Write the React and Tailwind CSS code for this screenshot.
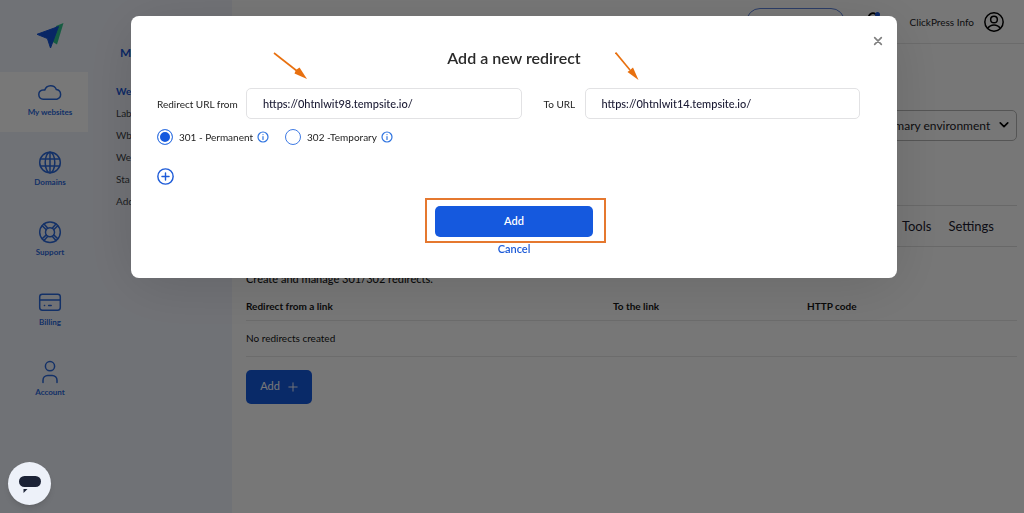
import { useState } from 'react';

const navItems = [
  { label: 'My websites', icon: CloudIcon, active: true },
  { label: 'Domains', icon: GlobeIcon },
  { label: 'Support', icon: SupportIcon },
  { label: 'Billing', icon: CardIcon },
  { label: 'Account', icon: PersonIcon },
];

const subItems = ['We', 'Lab', 'Wb', 'We', 'Sta', 'Add'];

function Icon({ children, className = 'size-6', width = 1.5 }) {
  return (
    <svg
      viewBox="0 0 24 24"
      className={className}
      fill="none"
      stroke="currentColor"
      strokeWidth={width}
      strokeLinecap="round"
      strokeLinejoin="round"
      aria-hidden="true"
    >
      {children}
    </svg>
  );
}

function CloudIcon() {
  return (
    <Icon>
      <path d="M5.2 19.2a4.6 4.6 0 0 1-.7-9.1 3.6 3.6 0 0 1 2.3 0A6.2 6.2 0 0 1 18.4 9.6a4.9 4.9 0 0 1 .5 9.6Z" />
    </Icon>
  );
}

function GlobeIcon() {
  return (
    <Icon>
      <circle cx="12" cy="12.5" r="10.3" />
      <ellipse cx="12" cy="12.5" rx="4.8" ry="10.3" />
      <path d="M12 2.2v20.6M2.5 9h19M2.5 16h19" />
    </Icon>
  );
}

function SupportIcon() {
  return (
    <Icon>
      <circle cx="12" cy="12.3" r="10.3" />
      <circle cx="12" cy="12.3" r="4.5" />
      <path d="m4.200 5.800 4.100 3.900M6 4l3.800 4.300M18 4l-3.800 4.300M19.800 5.800l-4.100 3.900M4.200 18.800l4.100-3.900M6 20.600l3.800-4.300M18 20.600l-3.800-4.300M19.800 18.800l-4.100-3.900" />
    </Icon>
  );
}

function CardIcon() {
  return (
    <Icon>
      <rect x="1.7" y="4.2" width="20.6" height="16" rx="2.6" />
      <path d="M1.7 10h20.6M6.4 15.4h.2M10.6 15.4h2.6" />
    </Icon>
  );
}

function PersonIcon() {
  return (
    <Icon>
      <circle cx="12" cy="6.2" r="4.6" />
      <path d="M5 22.4v-2.2a4.8 4.8 0 0 1 4.8-4.8h4.4a4.8 4.8 0 0 1 4.8 4.8v2.2" />
    </Icon>
  );
}

function InfoIcon() {
  return (
    <Icon className="size-3 text-[#2f74e0]" width={2.4}>
      <circle cx="12" cy="12" r="10" />
      <path d="M12 11v6M12 7v.2" />
    </Icon>
  );
}

function Sidebar() {
  return (
    <nav className="w-[88px] shrink-0">
      <a href="#" aria-label="Home" className="flex h-[72px] items-center justify-center pl-3">
        <svg viewBox="0 0 28 28" className="size-7" aria-hidden="true">
          <path d="M27.500 1 21 22.500l-5-3L20 4Z" fill="#2fc48d" />
          <path d="M22.500 4.500 14.500 26 11.400 16.500 1 12.300Z" fill="#1352d6" stroke="#1352d6" strokeLinejoin="round" />
        </svg>
      </a>
      <ul className="flex flex-col gap-[10px]">
        {navItems.map(({ label, icon: ItemIcon, active }) => (
          <li key={label}>
            <a
              href="#"
              className={`flex h-[60px] flex-col items-center pt-2 pl-3 text-[#2a68dc] ${
                active ? 'bg-white' : ''
              }`}
            >
              <ItemIcon />
              <span className="text-[8px]/4 font-bold whitespace-nowrap">{label}</span>
            </a>
          </li>
        ))}
      </ul>
    </nav>
  );
}

function SubMenu() {
  return (
    <aside className="w-36 shrink-0 pt-[43px] pl-7">
      <h2 className="pl-1 text-xs/5 font-bold text-[#1a56d6]">My</h2>
      <ul className="pt-[17px]">
        {subItems.map((item, i) => (
          <li key={i}>
            <a
              href="#"
              className={`block text-[10px]/[22px] ${
                i === 0 ? 'font-bold text-[#1a56d6]' : 'text-[#3c3f46]'
              }`}
            >
              {item}
            </a>
          </li>
        ))}
      </ul>
    </aside>
  );
}

function Header() {
  return (
    <header className="flex h-11 items-center justify-end border-b border-[#e4e4e4] pr-5">
      <input
        type="search"
        aria-label="Search"
        className="mr-[18px] h-7 w-[99px] rounded-full border border-[#5c82dc]"
      />
      <button aria-label="Notifications" className="relative mr-[27px]">
        <Icon className="size-5" width={2}>
          <path d="M4 17c2-2 1-7 3-12 2-5 8-5 10 0 2 5 1 10 3 12ZM10 21h4" />
        </Icon>
        <span className="absolute top-0 right-[3px] size-[5px] rounded-full bg-[#1a56d6]" />
      </button>
      <span className="mr-[10px] text-[10px]/4 text-[#1b1b1f]">ClickPress Info</span>
      <button aria-label="Profile">
        <Icon className="size-5" width={1.8}>
          <circle cx="12" cy="12" r="11" />
          <circle cx="12" cy="9" r="4" />
          <path d="M4.500 19.500c2-3 4.500-4 7.500-4s5.500 1 7.500 4" />
        </Icon>
      </button>
    </header>
  );
}

function Content() {
  return (
    <main className="pr-[7px] pl-[14px]">
      <div className="flex justify-end pt-[66px]">
        <div className="relative">
          <select
            aria-label="Environment"
            className="h-[31px] w-[150px] appearance-none rounded-[5px] border border-[#b5b5b5] pl-3 text-xs text-[#1b1b1f]"
          >
            <option>Primary environment</option>
          </select>
          <Icon className="pointer-events-none absolute top-[10px] right-2 size-[10px]" width={4}>
            <path d="m3 7 9 9 9-9" />
          </Icon>
        </div>
      </div>

      <div className="mt-16 flex h-[42px] items-center justify-end gap-[17px] border-y border-[#dedede] pt-px pr-[23px] text-[13px] text-[#1a1a2e]">
        <a href="#">Tools</a>
        <a href="#">Settings</a>
      </div>

      <p className="pt-6 text-[11px]/4 font-medium text-[#151515]">Create and manage 301/302 redirects.</p>

      <table className="mt-[6px] w-full table-fixed text-left text-[10px]/4 text-[#151515]">
        <thead>
          <tr className="h-[27px] border-b border-[#e6e6e6]">
            <th className="w-[367px] font-bold">Redirect from a link</th>
            <th className="w-[194px] font-bold">To the link</th>
            <th className="font-bold">HTTP code</th>
          </tr>
        </thead>
        <tbody>
          <tr className="h-9 border-b border-[#e6e6e6]">
            <td colSpan={3}>No redirects created</td>
          </tr>
        </tbody>
      </table>

      <button className="mt-[13px] flex h-[34px] w-[66px] items-center justify-center gap-2 rounded-[5px] bg-[#1559de] text-[11px] text-white">
        Add
        <Icon className="size-[10px]" width={2.2}>
          <path d="M12 2v20M2 12h20" />
        </Icon>
      </button>
    </main>
  );
}

function UrlField({ id, label, labelClass = '', value, onChange }) {
  return (
    <>
      <label htmlFor={id} className={`text-[10px]/4 whitespace-nowrap text-[#222] ${labelClass}`}>
        {label}
      </label>
      <input
        id={id}
        type="text"
        value={value}
        onChange={e => onChange(e.target.value)}
        className="h-[31px] w-full min-w-0 rounded-[5px] border border-[#e2e2e4] pl-4 text-[11px] font-medium text-[#1a1a33]"
      />
    </>
  );
}

function CodeOption({ label, checked, onChange }) {
  return (
    <div className="flex items-center">
      <label className="flex items-center gap-[6px]">
        <input
          type="radio"
          name="code"
          checked={checked}
          onChange={onChange}
          className="size-4 appearance-none rounded-full border border-[#3f7be4] checked:bg-[#1559de] checked:shadow-[inset_0_0_0_2px_white]"
        />
        <span className="text-[10px]/4 text-[#222]">{label}</span>
      </label>
      <button aria-label={`About ${label}`} className="ml-1">
        <InfoIcon />
      </button>
    </div>
  );
}

function RedirectModal() {
  const [from, setFrom] = useState('https://0htnlwit98.tempsite.io/');
  const [to, setTo] = useState('https://0htnlwit14.tempsite.io/');
  const [code, setCode] = useState(301);

  return (
    <div className="fixed inset-0 flex items-start justify-center bg-black/53 pt-4 pl-1">
      <div
        role="dialog"
        aria-labelledby="modal-title"
        className="relative w-full max-w-[766px] rounded-lg bg-white px-[26px] pt-8 pb-[21px] shadow-[0_8px_60px_rgba(0,0,0,0.12)]"
      >
        <button aria-label="Close" className="absolute top-5 right-[14px] text-[#808080]">
          <Icon className="size-[10px]" width={4}>
            <path d="m4 4 16 16M20 4 4 20" />
          </Icon>
        </button>

        <h1 id="modal-title" className="text-center text-base/5 font-semibold text-[#2a2a2a]">
          Add a new redirect
        </h1>

        <div className="mt-5 grid grid-cols-[79px_1fr_43px_1fr] items-center gap-x-[10px] pr-[11px]">
          <UrlField id="from" label="Redirect URL from" value={from} onChange={setFrom} />
          <UrlField id="to" label="To URL" labelClass="pl-3" value={to} onChange={setTo} />
        </div>

        <div className="mt-[10px] flex gap-4">
          <CodeOption label="301 - Permanent" checked={code === 301} onChange={() => setCode(301)} />
          <CodeOption label="302 -Temporary" checked={code === 302} onChange={() => setCode(302)} />
        </div>

        <button aria-label="Add another redirect" className="mt-[23px] block text-[#1d5bd8]">
          <Icon className="size-[17px]" width={2}>
            <circle cx="12" cy="12" r="10.8" />
            <path d="M12 7v10M7 12h10" />
          </Icon>
        </button>

        <div className="flex flex-col items-center pt-[21px]">
          <div className="relative">
            <button className="block h-[31px] w-[158px] rounded-[5px] bg-[#1559de] text-[11px] font-semibold text-white">
              Add
            </button>
            <span className="pointer-events-none absolute -top-2 -right-[13px] -bottom-[6px] -left-[10px] border-2 border-[#e5782f]" />
          </div>
          <button className="mt-1 text-[11px]/4 font-semibold text-[#1d5bd8]">Cancel</button>
        </div>

        {/* pointers to the two url fields */}
        <svg viewBox="0 0 34 28" className="absolute top-9 left-[142px] h-7 w-[34px]" aria-hidden="true">
          <path d="M1 1 24 19" stroke="#e8700f" strokeWidth="1.6" />
          <path d="M34 27 21.500 21.500 23 18l3.500-2.500Z" fill="#e8700f" />
        </svg>
        <svg viewBox="0 0 24 28" className="absolute top-9 left-[484px] h-7 w-6" aria-hidden="true">
          <path d="M.6.6 15 18" stroke="#e8700f" strokeWidth="1.6" />
          <path d="M23.500 28 12.500 20l2.500-2 3-2.500Z" fill="#e8700f" />
        </svg>
      </div>
    </div>
  );
}

export default function App() {
  return (
    <div className="flex min-h-screen bg-[#eff2fa] font-['Lato',sans-serif]">
      <Sidebar />
      <SubMenu />
      <div className="min-w-0 flex-1 bg-[#fdfdfd]">
        <Header />
        <Content />
      </div>
      <RedirectModal />
      <button
        aria-label="Open chat"
        className="fixed bottom-2 left-2 flex size-[43px] items-center justify-center rounded-full bg-[#edf1f9] shadow-md"
      >
        <svg viewBox="0 0 22 20" className="h-5 w-[22px]" fill="#1b2236" aria-hidden="true">
          <rect y="2" width="22" height="11" rx="5.500" />
          <path d="M4.500 15h4l-4 4Z" />
        </svg>
      </button>
    </div>
  );
}
